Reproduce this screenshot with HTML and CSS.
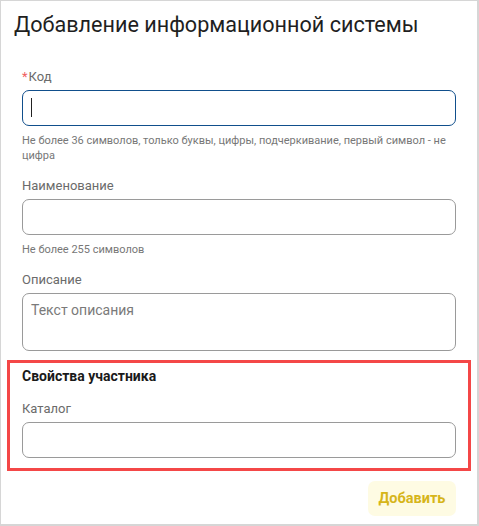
FILE: index.html
```html
<!DOCTYPE html>
<html lang="ru">
<head>
<meta charset="utf-8">
<link rel="stylesheet" href="styles.css">
</head>
<body>
<div class="page">
  <h1 class="title">Добавление информационной системы</h1>
  <div class="form">
    <div class="field">
      <div class="label"><span class="req">*</span>Код</div>
      <div class="input focused"><span class="caret"></span></div>
      <div class="help">Не более 36 символов, только буквы, цифры, подчеркивание, первый символ - не цифра</div>
    </div>
    <div class="field">
      <div class="label">Наименование</div>
      <div class="input"></div>
      <div class="help">Не более 255 символов</div>
    </div>
    <div class="field">
      <div class="label">Описание</div>
      <div class="textarea"><span class="placeholder">Текст описания</span></div>
    </div>
  </div>
  <div class="section">
    <div class="section-title">Свойства участника</div>
    <div class="label">Каталог</div>
    <div class="input"></div>
  </div>
  <div class="actions">
    <button class="btn">Добавить</button>
  </div>
</div>
</body>
</html>
```
FILE: styles.css
```css
html, body {
  margin: 0;
  padding: 0;
  background: #fff;
}
.page {
  box-sizing: border-box;
  width: 479px;
  height: 526px;
  border: 1px solid #d6d6d6;
  border-right-width: 2px;
  border-bottom-width: 2px;
  font-family: Roboto, "Liberation Sans", sans-serif;
  padding: 0 6px;
}
.title {
  margin: 0;
  padding: 10px 0 0 7px;
  font-size: 21.6px;
  font-weight: 400;
  line-height: 28px;
  color: #1f1f1f;
  height: 66px;
  box-sizing: border-box;
}
.form {
  padding: 0 15px;
}
.field {
  margin-bottom: 13px;
}
.label {
  font-size: 13px;
  line-height: 20px;
  color: #6b6b6b;
  margin-bottom: 3px;
}
.req {
  color: #f0605f;
  margin-right: 1px;
}
.input {
  box-sizing: border-box;
  height: 36px;
  border: 1px solid #9a9a9a;
  border-radius: 7px;
  position: relative;
}
.input.focused {
  border-color: #114f8c;
}
.caret {
  position: absolute;
  left: 8px;
  top: 7px;
  width: 1px;
  height: 19px;
  background: #222;
}
.help {
  font-size: 11px;
  line-height: 15px;
  color: #777;
  margin-top: 7px;
}
.textarea {
  box-sizing: border-box;
  height: 58px;
  border: 1px solid #9a9a9a;
  border-radius: 7px;
  padding: 6px 8px;
}
.placeholder {
  font-size: 14px;
  line-height: 20px;
  color: #7a7a7a;
}
.section {
  margin-top: -4px;
  border: 3px solid #f44747;
  padding: 3px 12px 10px;
}
.section-title {
  font-size: 14px;
  font-weight: 700;
  line-height: 20px;
  color: #1a1a1a;
  margin-bottom: 13px;
}
.actions {
  display: flex;
  justify-content: flex-end;
  padding: 10px 15px 0;
}
.btn {
  width: 88px;
  height: 35px;
  border: none;
  border-radius: 7px;
  background: #fefbe3;
  color: #d6b51a;
  font-family: Roboto, "Liberation Sans", sans-serif;
  font-size: 14.5px;
  font-weight: 700;
  padding: 0;
}
```
